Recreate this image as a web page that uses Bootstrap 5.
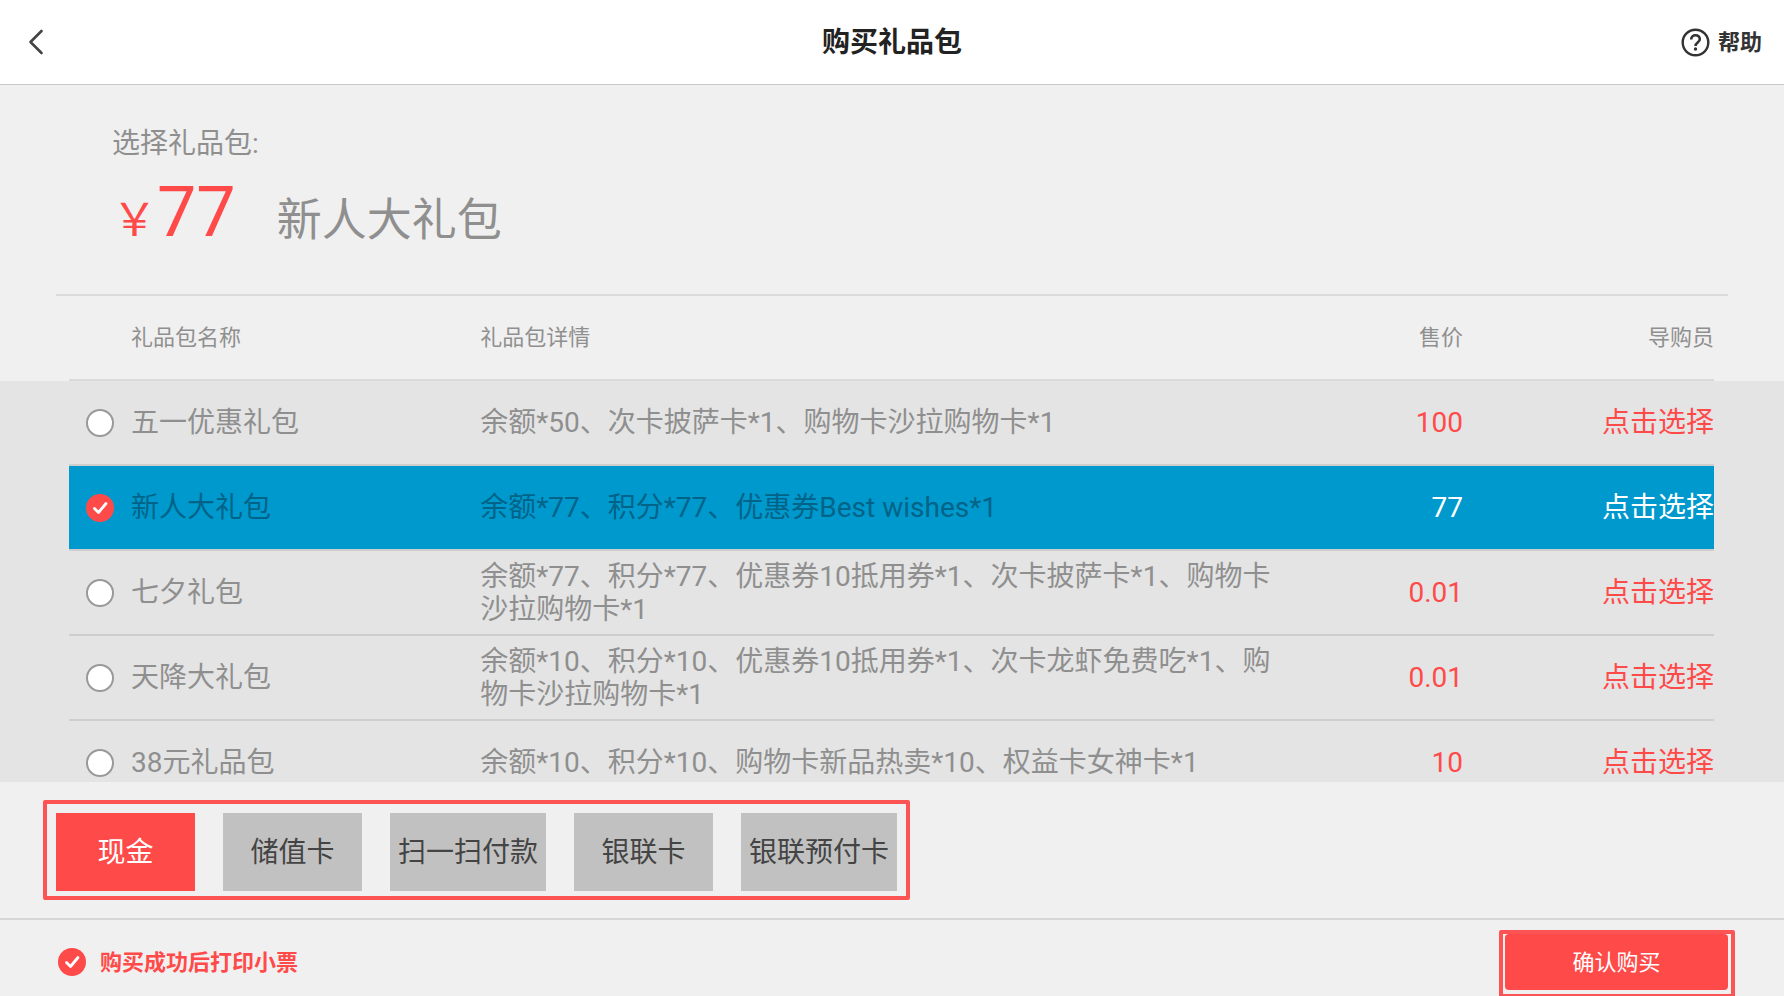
<!DOCTYPE html>
<html lang="zh-CN">
<head>
<meta charset="utf-8">
<meta name="viewport" content="width=device-width, initial-scale=1">
<title>购买礼品包</title>
<link href="https://cdn.jsdelivr.net/npm/bootstrap@5.3.0/dist/css/bootstrap.min.css" rel="stylesheet">
<style>
  :root { --brand: #ff4a4a; --page: #f0f0f0; --list: #e4e4e4; --rule: #d6d6d6; --muted: #8f8f8f; }
  body { font-family: Roboto, "Noto Sans CJK SC", sans-serif; font-size: 28px; line-height: 33px; color: var(--muted); background: var(--page); }
  .top-bar { height: 85px; border-bottom: 1px solid #c8c8c8; padding: 0 22px; color: #222; }
  .top-bar h1 { font-size: 28px; line-height: 33px; font-weight: 700; }
  .bar-side { flex: 1 1 0; }
  .icon-btn { border: 0; background: none; padding: 0 0 0 6px; color: #333; }
  .help-btn { font-size: 22px; font-weight: 700; gap: 8px; line-height: 33px; }
  .chosen { margin: 0 56px; padding: 42px 56px 32px; border-bottom: 2px solid #dadada; }
  .chosen-row { gap: 41px; margin-top: 11px; line-height: 82px; }
  .money { color: var(--brand); font-size: 70px; }
  .money-sign, .chosen-name { font-size: 45px; }
  .pack-scroll { padding: 0 70px 0 69px; overflow-y: auto; scrollbar-width: none; min-height: 0;
    background: linear-gradient(var(--page) 85px, var(--list) 85px); }
  .pack-scroll::-webkit-scrollbar { display: none; }
  .pack-table { width: 100%; table-layout: fixed; border-collapse: separate; border-spacing: 0; }
  .pack-table th, .pack-table td { height: 85px; padding: 0; vertical-align: middle; border-bottom: 2px solid #cecece; font-weight: 400; }
  .pack-table thead th { font-size: 22px; background: var(--page); position: sticky; top: 0; z-index: 1; border-color: #dadada; }
  .col-name { width: 25%; }
  .col-detail { width: 49%; }
  .col-seller { width: 251px; }
  .pack-table .name-head { padding-left: 62px; }
  .name-label { gap: 17px; padding-left: 17px; }
  .pack-table a, .price { color: var(--brand); }
  .pack-table .picked > * { background: #0099cd; color: #006387; }
  .pack-table .picked .price, .pack-table .picked a { color: #fff; }
  .tick { appearance: none; flex: none; margin: 0; width: 28px; height: 28px; border: 2px solid #999; border-radius: 50%; background: #fff; }
  .tick:checked { border: 0; background: var(--brand) url("data:image/svg+xml,%3Csvg xmlns='http://www.w3.org/2000/svg' viewBox='0 0 28 28'%3E%3Cpath d='M8.500 14.500l4 4 7.500-9' fill='none' stroke='%23fff' stroke-width='2.800' stroke-linecap='round' stroke-linejoin='round'/%3E%3C/svg%3E") center/contain; }
  .pay-box { margin: 18px 0 18px 43px; padding: 9px 9px 5px; border: 4px solid #fc5454; border-radius: 2px; gap: 28px; }
  .pay-btn { min-width: 139px; height: 78px; border: 0; padding: 0 8px; background: #c1c1c1; color: #444; }
  .pay-btn.active { background: var(--brand); color: #fff; }
  .foot-bar { border-top: 2px solid var(--rule); padding: 14px 56px 6px 58px; }
  .print-label { gap: 14px; font-size: 22px; font-weight: 700; color: var(--brand); }
  .confirm-wrap::after { content: ""; position: absolute; inset: -4px -7px -8px -6px; border: 4px solid #fc5454; border-radius: 2px; pointer-events: none; }
  .confirm-btn { width: 223px; height: 56px; border: 0; border-radius: 4px; background: var(--brand); color: #fff; font-size: 22px; }
</style>
</head>
<body>
<div class="vh-100 d-flex flex-column overflow-hidden">
  <header class="top-bar bg-white d-flex align-items-center flex-shrink-0">
    <div class="bar-side d-flex">
      <button class="icon-btn d-flex" type="button" aria-label="返回">
        <svg width="18" height="28" viewBox="0 0 18 28" fill="none" stroke="#444" stroke-width="2.600" stroke-linecap="round" stroke-linejoin="round"><path d="M13.500 3L2.500 14l11 11"/></svg>
      </button>
    </div>
    <h1 class="m-0">购买礼品包</h1>
    <div class="bar-side d-flex justify-content-end">
      <button class="icon-btn help-btn d-flex align-items-center" type="button">
        <svg width="29" height="29" viewBox="0 0 29 29" fill="none" stroke="#333" stroke-width="2.400"><circle cx="14.500" cy="14.500" r="12.800"/><path d="M10.200 11.500c0-2.700 1.900-4.200 4.300-4.200s4.300 1.500 4.300 3.900c0 3.300-4.300 3.300-4.300 6.800" stroke-width="2.600"/><circle cx="14.500" cy="21" r="1.700" fill="#333" stroke="none"/></svg>
        帮助
      </button>
    </div>
  </header>

  <section class="chosen flex-shrink-0">
    <div>选择礼品包:</div>
    <div class="chosen-row d-flex align-items-baseline">
      <div class="money"><span class="money-sign">￥</span>77</div>
      <div class="chosen-name">新人大礼包</div>
    </div>
  </section>

  <main class="pack-scroll flex-grow-1">
    <table class="pack-table">
      <colgroup><col class="col-name"><col class="col-detail"><col><col class="col-seller"></colgroup>
      <thead>
        <tr><th class="name-head" scope="col">礼品包名称</th><th scope="col">礼品包详情</th><th class="text-end" scope="col">售价</th><th class="text-end" scope="col">导购员</th></tr>
      </thead>
      <tbody>
        <tr>
          <td><label class="name-label d-flex align-items-center"><input class="tick" type="radio" name="pack">五一优惠礼包</label></td>
          <td>余额*50、次卡披萨卡*1、购物卡沙拉购物卡*1</td>
          <td class="price text-end">100</td>
          <td class="text-end"><a class="text-decoration-none" href="#">点击选择</a></td>
        </tr>
        <tr class="picked">
          <td><label class="name-label d-flex align-items-center"><input class="tick" type="radio" name="pack" checked>新人大礼包</label></td>
          <td>余额*77、积分*77、优惠券Best wishes*1</td>
          <td class="price text-end">77</td>
          <td class="text-end"><a class="text-decoration-none" href="#">点击选择</a></td>
        </tr>
        <tr>
          <td><label class="name-label d-flex align-items-center"><input class="tick" type="radio" name="pack">七夕礼包</label></td>
          <td>余额*77、积分*77、优惠券10抵用券*1、次卡披萨卡*1、购物卡沙拉购物卡*1</td>
          <td class="price text-end">0.01</td>
          <td class="text-end"><a class="text-decoration-none" href="#">点击选择</a></td>
        </tr>
        <tr>
          <td><label class="name-label d-flex align-items-center"><input class="tick" type="radio" name="pack">天降大礼包</label></td>
          <td>余额*10、积分*10、优惠券10抵用券*1、次卡龙虾免费吃*1、购物卡沙拉购物卡*1</td>
          <td class="price text-end">0.01</td>
          <td class="text-end"><a class="text-decoration-none" href="#">点击选择</a></td>
        </tr>
        <tr>
          <td><label class="name-label d-flex align-items-center"><input class="tick" type="radio" name="pack">38元礼品包</label></td>
          <td>余额*10、积分*10、购物卡新品热卖*10、权益卡女神卡*1</td>
          <td class="price text-end">10</td>
          <td class="text-end"><a class="text-decoration-none" href="#">点击选择</a></td>
        </tr>
      </tbody>
    </table>
  </main>

  <div class="pay-box d-flex align-self-start flex-shrink-0" role="group" aria-label="付款方式">
    <button class="pay-btn active" type="button">现金</button>
    <button class="pay-btn" type="button">储值卡</button>
    <button class="pay-btn" type="button">扫一扫付款</button>
    <button class="pay-btn" type="button">银联卡</button>
    <button class="pay-btn" type="button">银联预付卡</button>
  </div>

  <footer class="foot-bar d-flex align-items-center justify-content-between flex-shrink-0">
    <label class="print-label d-flex align-items-center"><input class="tick" type="checkbox" checked>购买成功后打印小票</label>
    <div class="confirm-wrap position-relative d-flex">
      <button class="confirm-btn" type="button">确认购买</button>
    </div>
  </footer>
</div>
<script src="https://cdn.jsdelivr.net/npm/bootstrap@5.3.0/dist/js/bootstrap.bundle.min.js"></script>
</body>
</html>
